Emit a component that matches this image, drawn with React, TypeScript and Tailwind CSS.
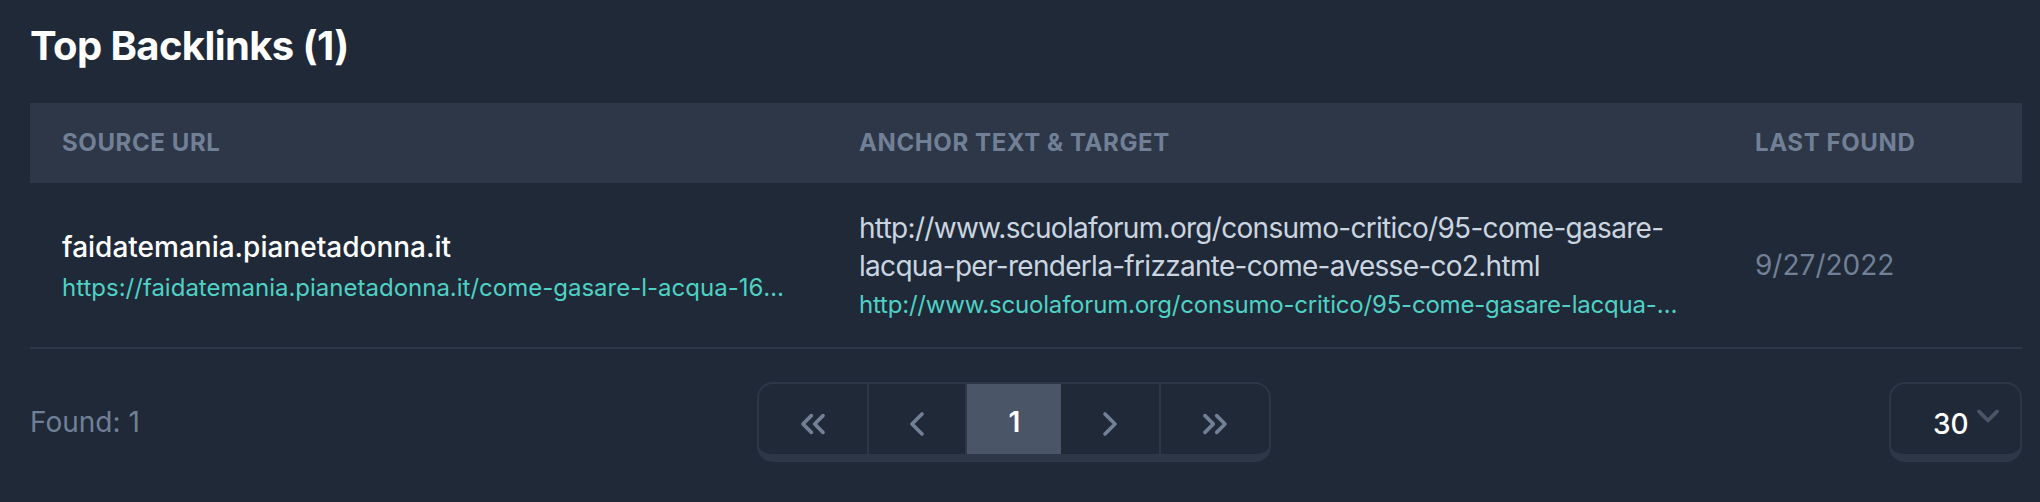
import React from 'react';
import { ChevronsLeft, ChevronLeft, ChevronRight, ChevronsRight, ChevronDown } from 'lucide-react';

// data for the single backlink row
const backlinks = [
  {
    domain: 'faidatemania.pianetadonna.it',
    sourceUrl: 'https://faidatemania.pianetadonna.it/come-gasare-l-acqua-16-frizzante-come-avesse-co2.html',
    anchor: 'http://www.scuolaforum.org/consumo-critico/95-come-gasare-lacqua-per-renderla-frizzante-come-avesse-co2.html',
    target: 'http://www.scuolaforum.org/consumo-critico/95-come-gasare-lacqua-per-renderla-frizzante-come-avesse-co2.html',
    lastFound: '9/27/2022',
  },
];

const App: React.FC = () => {
  return (
    <div className="min-h-screen bg-[#1f2937] pl-[30px] pr-[18px] pt-[18px] font-['Inter',sans-serif]">
      {/* Titolo */}
      <h2 className="text-[40px] leading-[56px] font-bold tracking-[-0.6px] text-white mb-[29px]">
        Top Backlinks ({backlinks.length})
      </h2>

      {/* Tabella */}
      <table className="w-full table-fixed border-collapse">
        <colgroup>
          <col className="w-[797px]" />
          <col className="w-[896px]" />
          <col />
        </colgroup>
        <thead>
          <tr className="bg-[#2d3748]">
            <th className="h-[80px] px-[32px] text-left text-[24px] font-bold uppercase tracking-wide text-[#718096]">Source URL</th>
            <th className="h-[80px] px-[32px] text-left text-[24px] font-bold uppercase tracking-wide text-[#718096]">Anchor Text &amp; Target</th>
            <th className="h-[80px] px-[32px] text-left text-[24px] font-bold uppercase tracking-wide text-[#718096]">Last Found</th>
          </tr>
        </thead>
        <tbody>
          {backlinks.map((b) => (
            <tr key={b.sourceUrl} className="border-b-2 border-[#2d3748]">
              <td className="px-[32px] py-[26px] align-middle">
                <div className="text-[28px] leading-[40px] font-medium text-white">{b.domain}</div>
                <div className="mt-[5px] text-[24px] leading-[32px] text-[#4fd1c5] truncate">{b.sourceUrl}</div>
              </td>
              <td className="px-[32px] py-[26px] align-middle">
                <div className="text-[28px] leading-[38px] tracking-[-0.7px] text-[#cbd5e0] break-words">{b.anchor}</div>
                <div className="mt-[4px] text-[24px] leading-[32px] tracking-[-0.2px] text-[#4fd1c5] truncate">{b.target}</div>
              </td>
              <td className="px-[32px] py-[26px] align-middle text-[28px] text-[#718096]">{b.lastFound}</td>
            </tr>
          ))}
        </tbody>
      </table>

      {/* Paginazione */}
      <div className="flex items-center justify-between pt-[33px]">
        <span className="text-[28px] leading-[40px] text-[#718096]">Found: {backlinks.length}</span>

        <div className="flex rounded-[16px] border-2 border-b-[8px] border-[#2d3748] overflow-hidden">
          <button className="w-[110px] h-[70px] pt-[10px] flex items-center justify-center border-r-2 border-[#2d3748] text-[#718096]">
            <ChevronsLeft size={40} strokeWidth={2.2} />
          </button>
          <button className="w-[98px] h-[70px] pt-[10px] flex items-center justify-center border-r-2 border-[#2d3748] text-[#718096]">
            <ChevronLeft size={40} strokeWidth={2.2} />
          </button>
          <button className="w-[94px] h-[70px] pt-[6px] flex items-center justify-center bg-[#4a5568] text-white text-[28px] font-semibold">
            1
          </button>
          <button className="w-[100px] h-[70px] pt-[10px] flex items-center justify-center border-r-2 border-[#2d3748] text-[#718096]">
            <ChevronRight size={40} strokeWidth={2.2} />
          </button>
          <button className="w-[108px] h-[70px] pt-[10px] flex items-center justify-center text-[#718096]">
            <ChevronsRight size={40} strokeWidth={2.2} />
          </button>
        </div>

        <div className="w-[133px] h-[80px] flex items-center pl-[42px] pt-[10px] rounded-[16px] border-2 border-b-[8px] border-[#2d3748]">
          <span className="text-[28px] leading-[40px] font-medium text-white">30</span>
          <ChevronDown size={36} strokeWidth={2.5} className="ml-[1px] mb-[16px] text-[#4a5568]" />
        </div>
      </div>
    </div>
  );
};

export default App;
